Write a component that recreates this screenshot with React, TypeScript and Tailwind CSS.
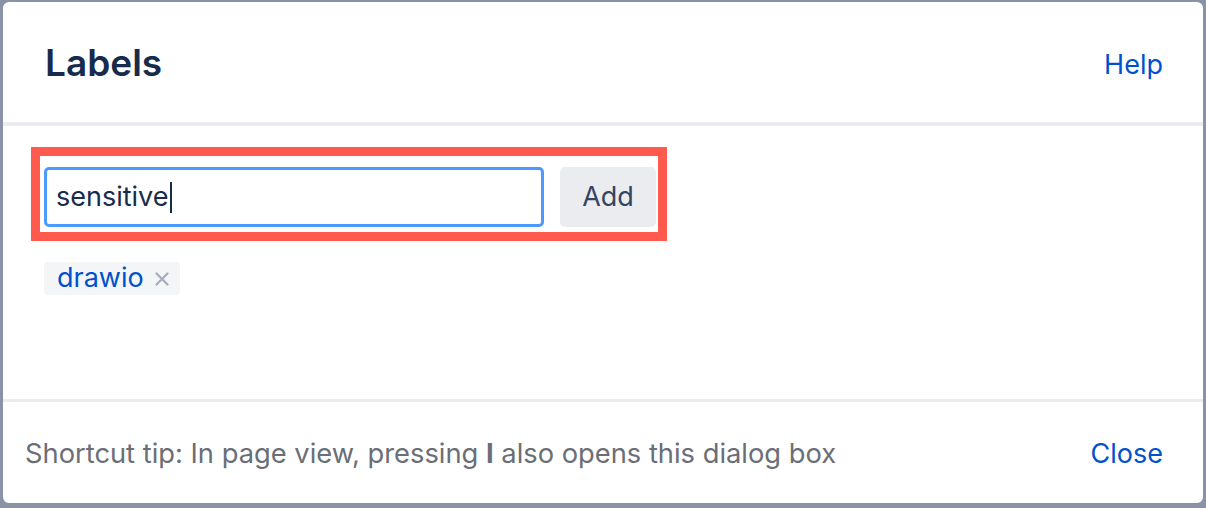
export default function App() {
  return (
    <div className="w-[1206px] h-[508px] bg-[#8a92a6] pt-[2px] pl-[3px] pr-[3px] pb-[5px] font-['Inter','Noto_Sans',sans-serif]">
      <div className="h-full flex flex-col bg-white rounded-[6px] overflow-hidden">
        {/* header */}
        <div className="h-[120px] flex items-center justify-between pl-[42px] pr-[40px]">
          <h1 className="text-[37px] font-semibold text-[#172b4d] pt-[2px]">Labels</h1>
          <a className="text-[27px] text-[#0052cc] pt-[6px]">Help</a>
        </div>
        <div className="h-[4px] bg-[#ebecf0]" />

        {/* body */}
        <div className="flex-1 pl-[28px] pt-[21px]">
          <div className="w-[636px] h-[94px] border-[9px] border-[#ff5a4d] flex items-start pl-[4px] pt-[11px]">
            <div className="w-[500px] h-[60px] border-[3px] border-[#4c9aff] rounded-[5px] flex items-center pl-[9px]">
              <span className="text-[27px] text-[#172b4d]">sensitive</span>
              <span className="w-[2px] h-[31px] bg-[#172b4d] ml-[1px]" />
            </div>
            <button className="ml-[16px] w-[96px] h-[60px] rounded-[5px] bg-[#ebecf0] text-[27px] text-[#344563]">
              Add
            </button>
          </div>
          <div className="mt-[21px] ml-[13px] inline-flex items-center h-[33px] rounded-[4px] bg-[#f4f5f7] pl-[13px] pr-[11px]">
            <span className="text-[27px] text-[#0052cc] leading-none pb-[2px]">drawio</span>
            <svg className="ml-[11px]" width="14" height="14" viewBox="0 0 14 14">
              <path d="M1.5 1.5 L12.5 12.5 M12.5 1.5 L1.5 12.5" stroke="#a5adba" strokeWidth="2.2" strokeLinecap="round" />
            </svg>
          </div>
        </div>

        {/* footer */}
        <div className="h-[3px] bg-[#ebecf0]" />
        <div className="h-[101px] flex items-center justify-between pl-[22px] pr-[40px] pt-[4px]">
          <p className="text-[27.3px] text-[#6b6e76]">
            Shortcut tip: In page view, pressing <b className="font-bold">I</b> also opens this dialog box
          </p>
          <a className="text-[27px] text-[#0052cc]">Close</a>
        </div>
      </div>
    </div>
  )
}
